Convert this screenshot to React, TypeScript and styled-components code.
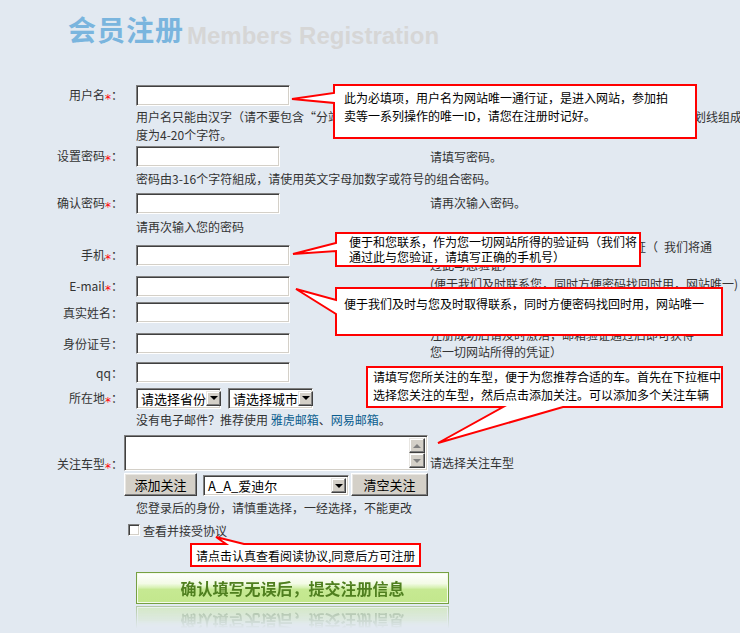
import React from "react";
import styled, { createGlobalStyle } from "styled-components";

const GlobalStyle = createGlobalStyle`
  html, body { margin: 0; padding: 0; overflow: hidden; }
  body {
    background: #e2e9f1;
    font-family: "Noto Sans CJK SC", "Noto Sans", sans-serif;
    font-size: 12px;
    color: #333;
  }
`;

const Page = styled.div`
  position: relative;
  width: 740px;
  height: 633px;
  overflow: hidden;
`;

const Header = styled.header`
  display: flex;
  align-items: flex-start;
  height: 82px;
  padding-left: 68px;
  box-sizing: border-box;
`;

const TitleCn = styled.h1`
  margin: 15px 0 0;
  font-size: 28px;
  line-height: 28px;
  font-weight: 700;
  letter-spacing: 1px;
  color: #7ab5de;
`;

const TitleEn = styled.span`
  margin: 24px 0 0 3px;
  font-family: "Liberation Sans", Arial, sans-serif;
  font-size: 24px;
  line-height: 24px;
  font-weight: 700;
  color: #d6d6d6;
`;

const Form = styled.div`
  display: grid;
  grid-template-columns: 124px 306px 310px;
  grid-template-rows: 26px 36px 25px 20px 28px 20px 37px 25px 27px 34px 25px 26px 18px 70px 18px 26px;
`;

const Label = styled.div`
  align-self: center;
  text-align: right;
  padding-right: 1px;
  line-height: 17px;
  white-space: nowrap;
  color: #333;
`;

const Req = styled.span`
  display: inline-block;
  vertical-align: -3px;
  font-family: "DejaVu Sans", sans-serif;
  font-size: 12px;
  line-height: 12px;
  color: #ff0000;
`;

const Field = styled.div<{ $span?: number; $flush?: boolean }>`
  grid-column: span ${(p) => p.$span || 1};
  align-self: center;
  display: flex;
  align-items: center;
  gap: 7px;
  padding-left: ${(p) => (p.$flush ? 0 : 12)}px;
`;

const TextInput = styled.input<{ $w: number }>`
  width: ${(p) => p.$w}px;
  height: 21px;
  box-sizing: border-box;
  margin: 0;
  padding: 0 3px;
  border: 1px solid;
  border-color: #808080 #ffffff #ffffff #808080;
  box-shadow: inset 1px 1px 0 #404040, inset -1px -1px 0 #d4d0c8;
  background: #fff;
  font: inherit;
  outline: none;
`;

const Hint = styled.div`
  grid-column: span 2;
  align-self: center;
  padding-left: 12px;
  line-height: 18px;
  white-space: nowrap;
  color: #333;
`;

const Note = styled.div<{ $rows?: number; $lh?: number }>`
  grid-row: span ${(p) => p.$rows || 1};
  align-self: center;
  line-height: ${(p) => p.$lh || 18}px;
  white-space: nowrap;
  color: #333;
`;

const Link = styled.a`
  color: #0b5e8f;
  text-decoration: none;
`;

const SelectBox = styled.div<{ $w: number }>`
  display: flex;
  align-items: center;
  justify-content: space-between;
  width: ${(p) => p.$w}px;
  height: 21px;
  box-sizing: border-box;
  padding: 2px 2px 2px 4px;
  border: 1px solid;
  border-color: #808080 #ffffff #ffffff #808080;
  box-shadow: inset 1px 1px 0 #404040, inset -1px -1px 0 #d4d0c8;
  background: #fff;
  font-size: 13px;
  line-height: 15px;
  color: #000;
  white-space: nowrap;
`;

const ArrowBtn = styled.span`
  flex: none;
  display: flex;
  align-items: center;
  justify-content: center;
  width: 15px;
  height: 15px;
  box-sizing: border-box;
  background: #d4d0c8;
  border: 1px solid;
  border-color: #e8e6e2 #404040 #404040 #e8e6e2;
  box-shadow: inset -1px -1px 0 #808080, inset 1px 1px 0 #ffffff;
`;

const Tri = styled.span<{ $up?: boolean; $color?: string }>`
  width: 0;
  height: 0;
  border-left: 4px solid transparent;
  border-right: 4px solid transparent;
  ${(p) =>
    p.$up
      ? `border-bottom: 4px solid ${p.$color || "#000"};`
      : `border-top: 4px solid ${p.$color || "#000"};`}
`;

const CarCell = styled.div`
  grid-column: span 2;
  align-self: start;
  display: flex;
  flex-direction: column;
  padding-top: 6px;
`;

const CarTop = styled.div`
  display: flex;
  align-items: flex-end;
`;

const ListBox = styled.div`
  display: flex;
  justify-content: flex-end;
  width: 304px;
  height: 36px;
  box-sizing: border-box;
  padding: 2px;
  border: 1px solid;
  border-color: #808080 #ffffff #ffffff #808080;
  box-shadow: inset 1px 1px 0 #404040, inset -1px -1px 0 #d4d0c8;
  background: #fff;
`;

const ScrollBar = styled.div`
  display: flex;
  flex-direction: column;
  justify-content: space-between;
  width: 16px;
  background: #eeece8;
`;

const ScrollBtn = styled(ArrowBtn)`
  width: 16px;
`;

const InlineNote = styled.span`
  margin-left: 2px;
  line-height: 17px;
  color: #333;
  white-space: nowrap;
`;

const CarButtons = styled.div`
  display: flex;
  align-items: flex-end;
  width: 304px;
  margin-top: 2px;
`;

const ClassicButton = styled.button<{ $w: number }>`
  width: ${(p) => p.$w}px;
  height: 23px;
  margin: 0;
  padding: 0;
  box-sizing: border-box;
  background: #d4d0c8;
  border: 1px solid;
  border-color: #ffffff #404040 #404040 #ffffff;
  box-shadow: inset -1px -1px 0 #808080, inset 1px 1px 0 #e8e6e2;
  font-family: inherit;
  font-size: 13px;
  line-height: 15px;
  color: #000;
`;

const CarSelect = styled(SelectBox)`
  margin: 0 2px 0 6px;
`;

const CheckCell = styled.label`
  grid-column: span 2;
  align-self: center;
  display: flex;
  align-items: center;
  line-height: 17px;
  color: #333;
`;

const CheckBox = styled.input`
  appearance: none;
  -webkit-appearance: none;
  width: 12px;
  height: 12px;
  margin: 0 3px 0 4px;
  box-sizing: border-box;
  border: 1px solid;
  border-color: #808080 #ffffff #ffffff #808080;
  box-shadow: inset 1px 1px 0 #404040, inset -1px -1px 0 #d4d0c8;
  background: #fff;
`;

const SubmitWrap = styled.div`
  padding-left: 136px;
  margin-top: 29px;
`;

const SubmitButton = styled.button`
  display: block;
  width: 313px;
  height: 32px;
  margin: 0;
  padding: 0;
  box-sizing: border-box;
  border: 1px solid #76a042;
  box-shadow: inset 0 0 0 1px #f4fbe9;
  background: linear-gradient(
    to bottom,
    #ffffff 0%,
    #f3fbe6 35%,
    #d9f2b6 48%,
    #c6e992 55%,
    #c3e78d 100%
  );
  font-family: inherit;
  font-size: 16px;
  font-weight: 700;
  color: #4f7f1f;
  -webkit-box-reflect: below 2px
    linear-gradient(to bottom, transparent 30%, rgba(255, 255, 255, 0.45));
`;

const CalloutWrap = styled.div`
  position: absolute;
  pointer-events: none;
  svg {
    position: absolute;
    left: 0;
    top: 0;
    overflow: visible;
  }
`;

const CalloutText = styled.div`
  position: absolute;
  font-size: 12px;
  color: #000;
  word-break: break-all;
`;

type Pt = [number, number];

function Callout(props: {
  pts: Pt[];
  text: string;
  tx: number;
  ty: number;
  tw: number;
  lh: number;
}) {
  const { pts, text, tx, ty, tw, lh } = props;
  const xs = pts.map((p) => p[0]);
  const ys = pts.map((p) => p[1]);
  const minX = Math.min(...xs) - 2;
  const minY = Math.min(...ys) - 2;
  const w = Math.max(...xs) - minX + 2;
  const h = Math.max(...ys) - minY + 2;
  const d =
    "M" + pts.map(([x, y]) => `${x - minX},${y - minY}`).join(" L") + " Z";
  return (
    <CalloutWrap style={{ left: minX, top: minY, width: w, height: h }}>
      <svg width={w} height={h}>
        <path d={d} fill="#ffffff" stroke="#ff0000" strokeWidth={2} />
      </svg>
      <CalloutText
        style={{ left: tx - minX, top: ty - minY, width: tw, lineHeight: `${lh}px` }}
      >
        {text}
      </CalloutText>
    </CalloutWrap>
  );
}

function FakeSelect({ w, text }: { w: number; text: string }) {
  return (
    <SelectBox $w={w}>
      <span>{text}</span>
      <ArrowBtn>
        <Tri />
      </ArrowBtn>
    </SelectBox>
  );
}

function FieldLabel({ text, req }: { text: string; req?: boolean }) {
  return (
    <Label>
      {text}
      {req && <Req>*</Req>}：
    </Label>
  );
}

const callouts = [
  {
    pts: [
      [334, 85],
      [696, 85],
      [696, 138],
      [334, 138],
      [334, 103],
      [292, 99],
      [334, 93],
    ] as Pt[],
    text: "此为必填项，用户名为网站唯一通行证，是进入网站，参加拍卖等一系列操作的唯一ID，请您在注册时记好。",
    tx: 344,
    ty: 89,
    tw: 330,
    lh: 18,
  },
  {
    pts: [
      [336, 233],
      [640, 233],
      [640, 266],
      [336, 266],
      [336, 251],
      [293, 254],
      [336, 243],
    ] as Pt[],
    text: "便于和您联系，作为您一切网站所得的验证码（我们将通过此与您验证，请填写正确的手机号）",
    tx: 349,
    ty: 234,
    tw: 291,
    lh: 15,
  },
  {
    pts: [
      [336, 288],
      [722, 288],
      [722, 335],
      [336, 335],
      [336, 314],
      [296, 289],
      [336, 300],
    ] as Pt[],
    text: "便于我们及时与您及时取得联系，同时方便密码找回时用，网站唯一",
    tx: 344,
    ty: 295,
    tw: 370,
    lh: 17,
  },
  {
    pts: [
      [367, 367],
      [722, 367],
      [722, 407],
      [563, 407],
      [438, 443],
      [503, 407],
      [367, 407],
    ] as Pt[],
    text: "请填写您所关注的车型，便于为您推荐合适的车。首先在下拉框中选择您关注的车型，然后点击添加关注。可以添加多个关注车辆",
    tx: 373,
    ty: 368,
    tw: 350,
    lh: 18,
  },
  {
    pts: [
      [191, 544],
      [226, 544],
      [216, 537],
      [244, 544],
      [420, 544],
      [420, 566],
      [191, 566],
    ] as Pt[],
    text: "请点击认真查看阅读协议,同意后方可注册",
    tx: 196,
    ty: 547,
    tw: 228,
    lh: 17,
  },
];

export default function App() {
  return (
    <Page>
      <GlobalStyle />
      <Header>
        <TitleCn>会员注册</TitleCn>
        <TitleEn>Members Registration</TitleEn>
      </Header>

      <Form>
        <FieldLabel text="用户名" req />
        <Field>
          <TextInput $w={154} />
        </Field>
        <Note />

        <Label />
        <Hint>
          用户名只能由汉字（请不要包含“分站”、“管理员”、“客服”等类似的敏感字样）、英文字母、数字以及下划线组成，长
          <br />
          度为4-20个字符。
        </Hint>

        <FieldLabel text="设置密码" req />
        <Field>
          <TextInput $w={144} type="password" />
        </Field>
        <Note>请填写密码。</Note>

        <Label />
        <Hint>密码由3-16个字符組成，请使用英文字母加数字或符号的组合密码。</Hint>

        <FieldLabel text="确认密码" req />
        <Field>
          <TextInput $w={144} type="password" />
        </Field>
        <Note>请再次输入密码。</Note>

        <Label />
        <Hint>请再次输入您的密码</Hint>

        <FieldLabel text="手机" req />
        <Field>
          <TextInput $w={154} />
        </Field>
        <Note>
          便于和您联系，作为您一切网站所得凭证（&#8194;我们将通
          <br />
          过此与您验证）
        </Note>

        <FieldLabel text="E-mail" req />
        <Field>
          <TextInput $w={154} />
        </Field>
        <Note $rows={3} $lh={17}>
          (便于我们及时联系您，同时方便密码找回时用，网站唯一)
          <br />
          邮箱将作为您找回密码的唯一途径，请务必填写真实
          <br />
          有效的邮箱地址，我们将向该邮箱发送激活邮件，
          <br />
          注册成功后请及时激活，邮箱验证通过后即可获得
          <br />
          您一切网站所得的凭证）
        </Note>

        <FieldLabel text="真实姓名" />
        <Field>
          <TextInput $w={154} />
        </Field>

        <FieldLabel text="身份证号" />
        <Field>
          <TextInput $w={154} />
        </Field>

        <FieldLabel text="qq" />
        <Field>
          <TextInput $w={154} />
        </Field>
        <Note />

        <FieldLabel text="所在地" req />
        <Field $span={2}>
          <FakeSelect w={85} text="请选择省份" />
          <FakeSelect w={85} text="请选择城市" />
        </Field>

        <Label />
        <Hint>
          没有电子邮件？推荐使用 <Link href="#">雅虎邮箱</Link>、
          <Link href="#">网易邮箱</Link>。
        </Hint>

        <FieldLabel text="关注车型" req />
        <CarCell>
          <CarTop>
            <ListBox>
              <ScrollBar>
                <ScrollBtn>
                  <Tri $up $color="#808080" />
                </ScrollBtn>
                <ScrollBtn>
                  <Tri $color="#808080" />
                </ScrollBtn>
              </ScrollBar>
            </ListBox>
            <InlineNote>请选择关注车型</InlineNote>
          </CarTop>
          <CarButtons>
            <ClassicButton $w={73}>添加关注</ClassicButton>
            <CarSelect $w={146}>
              <span>A_A_爱迪尔</span>
              <ArrowBtn>
                <Tri />
              </ArrowBtn>
            </CarSelect>
            <ClassicButton $w={77}>清空关注</ClassicButton>
          </CarButtons>
        </CarCell>

        <Label />
        <Hint>您登录后的身份，请慎重选择，一经选择，不能更改</Hint>

        <Label />
        <CheckCell>
          <CheckBox type="checkbox" />
          查看并接受协议
        </CheckCell>
      </Form>

      <SubmitWrap>
        <SubmitButton>确认填写无误后，提交注册信息</SubmitButton>
      </SubmitWrap>

      {callouts.map((c, i) => (
        <Callout key={i} {...c} />
      ))}
    </Page>
  );
}
